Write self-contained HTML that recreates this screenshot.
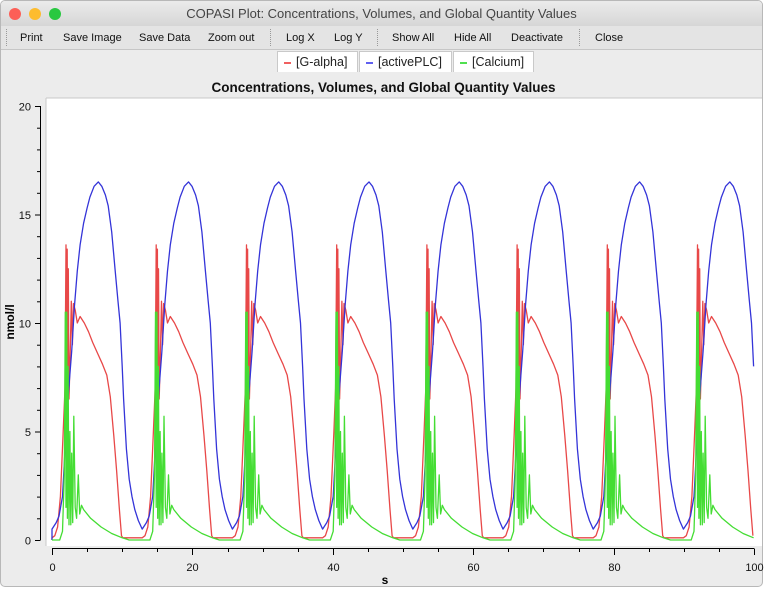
<!DOCTYPE html>
<html><head><meta charset="utf-8">
<style>
html,body{margin:0;padding:0;background:#fff;}
body{width:765px;height:589px;overflow:hidden;font-family:"Liberation Sans",Arial,sans-serif;}
.win{position:absolute;left:0;top:0;width:763px;height:587px;background:#ececec;border:1px solid #b8b8b8;border-radius:5px;box-sizing:border-box;overflow:hidden;}
.tb{position:absolute;left:0;top:0;width:100%;height:25px;background:linear-gradient(#ebebeb,#d6d6d6);text-align:center;font-size:13px;line-height:26px;color:#444;}
.dot{position:absolute;top:7px;width:12px;height:12px;border-radius:50%;}
.tool{position:absolute;top:25px;left:0;width:100%;height:23px;background:#e4e4e4;border-bottom:1px solid #c6c6c6;font-size:11px;color:#111;}
.tool span{position:absolute;top:6px;}
.sep{position:absolute;top:3px;height:17px;border-left:1px dotted #999;}
.leg{position:absolute;top:50px;height:21px;background:#fff;border:1px solid #c9c9c9;border-bottom:none;font-size:12.5px;line-height:21px;color:#222;box-sizing:border-box;padding-left:6px;}
.leg b{display:inline-block;width:7px;height:2px;vertical-align:middle;margin-right:5px;}
.title{position:absolute;top:79px;left:0;width:765px;text-align:center;font-weight:bold;font-size:13.5px;color:#111;}
</style></head><body>
<div class="win">
 <div class="tb">COPASI Plot: Concentrations, Volumes, and Global Quantity Values
  <div class="dot" style="left:8px;background:#fc5f57;"></div>
  <div class="dot" style="left:28px;background:#fdbc2e;"></div>
  <div class="dot" style="left:48px;background:#28c840;"></div>
 </div>
 <div class="tool">
  <div class="sep" style="left:5px"></div>
  <span style="left:19px">Print</span><span style="left:62px">Save Image</span><span style="left:138px">Save Data</span><span style="left:207px">Zoom out</span>
  <div class="sep" style="left:269px"></div>
  <span style="left:285px">Log X</span><span style="left:333px">Log Y</span>
  <div class="sep" style="left:376px"></div>
  <span style="left:391px">Show All</span><span style="left:453px">Hide All</span><span style="left:510px">Deactivate</span>
  <div class="sep" style="left:578px"></div>
  <span style="left:594px">Close</span>
 </div>
 <div class="leg" style="left:276px;width:81px"><b style="background:#f06060"></b>[G-alpha]</div>
 <div class="leg" style="left:358px;width:93px"><b style="background:#6060f0"></b>[activePLC]</div>
 <div class="leg" style="left:452px;width:81px"><b style="background:#50e050"></b>[Calcium]</div>
 <div class="title">Concentrations, Volumes, and Global Quantity Values</div>
</div>
<svg id="pl" width="765" height="589" style="position:absolute;left:0;top:0" font-family="Liberation Sans, Arial, sans-serif">
 <rect x="46" y="98" width="716" height="448" fill="#fff"/>
 <line x1="46" y1="98" x2="762" y2="98" stroke="#c8c8c8"/>
 <line x1="46" y1="98" x2="46" y2="546" stroke="#c8c8c8"/>
 <g id="ax" stroke="#000" stroke-width="1" fill="none"></g>
 <g id="lb" font-size="11" fill="#111"></g>
 <text x="385" y="584" font-size="12" font-weight="bold" text-anchor="middle">s</text>
 <text transform="translate(14,322) rotate(-90)" font-size="12" font-weight="bold" text-anchor="middle">nmol/l</text>
 <g id="cv" fill="none" stroke-width="1.3" stroke-linejoin="round"></g>
</svg>
<script>
var X=function(t){return 52+t*7.02},Y=function(v){return 540-v*21.7};
var ax=document.getElementById('ax'),lb=document.getElementById('lb'),s='',l='';
s+='<line x1="40.5" y1="106" x2="40.5" y2="540"/>';
for(var i=0;i<=20;i++){var y=Y(i)+.5,m=i%5==0;s+='<line x1="'+(m?35:37)+'" y1="'+y+'" x2="40.5" y2="'+y+'"/>';if(m)l+='<text x="31" y="'+(y+4)+'" text-anchor="end">'+i+'</text>';}
s+='<line x1="52" y1="548.5" x2="754" y2="548.5"/>';
for(var i=0;i<=100;i+=5){var x=Math.round(X(i))+.5,m=i%20==0;s+='<line x1="'+x+'" y1="548.5" x2="'+x+'" y2="'+(m?555:552)+'"/>';if(m)l+='<text x="'+x+'" y="571" text-anchor="middle">'+i+'</text>';}
ax.innerHTML=s;lb.innerHTML=l;
var P=12.85,O=2;
var B=[[-2,0.5],[-1.4,0.8],[-1,1.1],[-0.5,2],[0,5],[0.4,7],[0.8,8.7],[1.2,10.8],[1.6,12.4],[2.0,13.6],[2.5,14.6],[3.0,15.3],[3.4,15.8],[4.0,16.3],[4.6,16.5],[5.1,16.3],[5.6,15.9],[6,15.4],[6.5,14.2],[7,12.4],[7.4,11],[7.7,10],[8.0,8],[8.2,6.5],[8.6,4.2],[9,2.8],[9.4,2],[9.8,1.4],[10.3,0.9],[10.85,0.5]];
var R=[[-2,0.1],[-1.6,0.2],[-1.2,0.6],[-0.8,2],[-0.4,5],[-0.15,7],[0,13.6],[0.08,7],[0.16,13.4],[0.24,6.3],[0.32,12.5],[0.42,6.5],[0.6,8.8],[0.75,11],[0.9,9],[1.05,10.9],[1.3,10.6],[1.6,10],[2,10.3],[2.6,10],[3.2,9.6],[3.8,9.1],[4.5,8.6],[5.2,8.1],[5.8,7.6],[6.3,6.6],[6.8,4.8],[7.2,3.2],[7.6,1.4],[7.9,0.2],[8.1,0.1],[10.85,0.1]];
var G=[[-2,0],[-0.9,0],[-0.5,0.4],[-0.25,3],[-0.1,10.5],[0,1.5],[0.1,10.5],[0.2,1],[0.3,8],[0.42,0.7],[0.55,5],[0.68,0.7],[0.8,4],[0.95,0.8],[1.1,5.7],[1.3,1.5],[1.5,1.0],[1.75,3],[1.95,1.2],[2.2,1.6],[2.5,1.4],[3.5,1.0],[5,0.6],[6.5,0.3],[8,0.1],[9,0],[10.85,0]];
function path(K){var d='M'+X(0).toFixed(1)+','+Y(0).toFixed(1);
 for(var k=0;k<9;k++){for(var j=0;j<K.length;j++){var t=O+k*P+K[j][0];if(t<0||t>100)continue;d+='L'+X(t).toFixed(1)+','+Y(K[j][1]).toFixed(1);}}
 return d;}
document.getElementById('cv').innerHTML=
 '<path d="'+path(R)+'" stroke="#e84848"/>'+
 '<path d="'+path(B)+'" stroke="#3434d8"/>'+
 '<path d="'+path(G)+'" stroke="#44dd33"/>';
</script>
</body></html>
